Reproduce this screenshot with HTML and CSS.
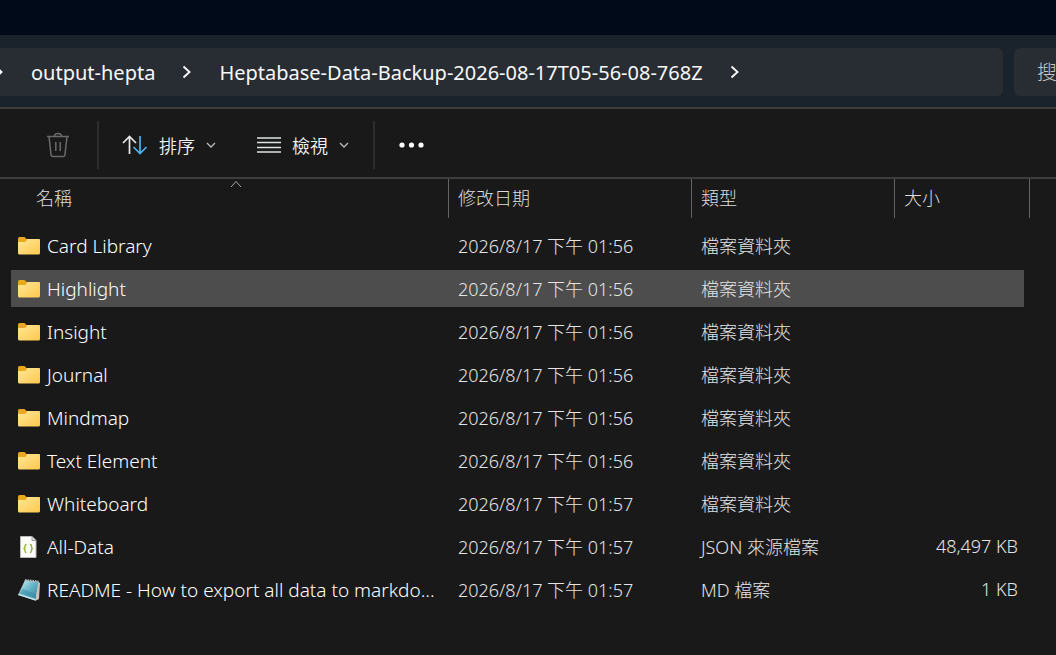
FILE: index.html
```html
<!DOCTYPE html>
<html lang="zh-Hant">
<head>
    <meta charset="UTF-8">
    <meta name="viewport" content="width=device-width, initial-scale=1">
    <title>Heptabase-Data-Backup</title>
    <link rel="stylesheet" href="styles.css">
</head>
<body>
    <svg class="defs" width="0" height="0" aria-hidden="true">
        <defs>
            <linearGradient id="folder-front" x1="0" y1="0" x2="1" y2="1">
                <stop offset="0" stop-color="#ffe69a"/>
                <stop offset="1" stop-color="#fdc94b"/>
            </linearGradient>
            <linearGradient id="note-page" x1="0" y1="0" x2="1" y2="1">
                <stop offset="0" stop-color="#d3f1f7"/>
                <stop offset="0.5" stop-color="#67b3c6"/>
                <stop offset="1" stop-color="#2b7f9b"/>
            </linearGradient>
            <symbol id="folder" viewBox="0 0 22 18">
                <path d="M0 2Q0 0 1.500 0H6.500L8.500 2H20.500Q22 2 22 3.500V10H0Z" fill="#e9a820"/>
                <path d="M0 5H6.500Q7.500 5 8.300 4L9 2H21Q22 2 22 3V16Q22 17.500 20.500 17.500H1.500Q0 17.500 0 16Z" fill="url(#folder-front)"/>
            </symbol>
            <symbol id="chevron" viewBox="0 0 10 14">
                <path d="M1.500 1.500L7.500 7L1.500 12.500" fill="none" stroke="currentColor" stroke-width="1.900"/>
            </symbol>
            <symbol id="caret" viewBox="0 0 10 6">
                <path d="M1 1L5 5L9 1" fill="none" stroke="currentColor" stroke-width="1.300"/>
            </symbol>
        </defs>
    </svg>

    <div class="titlebar"></div>

    <header class="navbar">
        <nav class="address" aria-label="路徑">
            <svg class="chevron" aria-hidden="true"><use href="#chevron"/></svg>
            <button type="button" class="crumb">output-hepta</button>
            <svg class="chevron" aria-hidden="true"><use href="#chevron"/></svg>
            <button type="button" class="crumb">Heptabase-Data-Backup-2026-08-17T05-56-08-768Z</button>
            <svg class="chevron" aria-hidden="true"><use href="#chevron"/></svg>
        </nav>
        <input class="search" type="text" placeholder="搜" aria-label="搜尋">
    </header>

    <div class="toolbar">
        <button type="button" class="tool tool-delete" aria-label="刪除" disabled>
            <svg width="24" height="26" viewBox="0 0 24 26" fill="none" stroke="currentColor" stroke-width="1.500">
                <path d="M1 4.500H23M8.500 4.500Q8.500 1.500 12 1.500T15.500 4.500M3 4.500L5 22.500Q5.200 24.500 7 24.500H17Q18.800 24.500 19 22.500L21 4.500M9.800 10V19M14.200 10V19"/>
            </svg>
        </button>
        <span class="divider"></span>
        <button type="button" class="tool tool-sort">
            <svg width="26" height="20" viewBox="0 0 26 20" fill="none" stroke-width="1.700">
                <path d="M7.500 19V1.500M1 8L7.500 1.500L14 8" stroke="#e8e8e8"/>
                <path d="M18 1V18.500M11.500 12L18 18.500L24.500 12" stroke="#4cb4ee"/>
            </svg>
            <span>排序</span>
            <svg class="caret" aria-hidden="true"><use href="#caret"/></svg>
        </button>
        <button type="button" class="tool tool-view">
            <svg width="24" height="18" viewBox="0 0 24 18" stroke="#dce4e1" stroke-width="1.500">
                <path d="M0 2H24M0 6.500H24M0 11.500H24M0 16H24"/>
            </svg>
            <span>檢視</span>
            <svg class="caret" aria-hidden="true"><use href="#caret"/></svg>
        </button>
        <span class="divider"></span>
        <button type="button" class="tool tool-more" aria-label="查看更多">
            <svg width="26" height="6" viewBox="0 0 26 6" fill="#fff">
                <circle cx="3" cy="3" r="2.600"/>
                <circle cx="12.500" cy="3" r="2.600"/>
                <circle cx="22" cy="3" r="2.600"/>
            </svg>
        </button>
    </div>

    <main class="list">
        <table class="files">
            <colgroup>
                <col class="col-name">
                <col class="col-date">
                <col class="col-type">
                <col class="col-size">
            </colgroup>
            <thead>
                <tr>
                    <th class="sorted" aria-sort="ascending">名稱
                        <svg class="sort-mark" viewBox="0 0 12 8" aria-hidden="true">
                            <path d="M1 7L6 1.500L11 7" fill="none" stroke="#a8a8a8"/>
                        </svg>
                    </th>
                    <th>修改日期</th>
                    <th>類型</th>
                    <th>大小</th>
                </tr>
            </thead>
            <tbody>
                <tr>
                    <td><div class="name"><svg class="icon" aria-hidden="true"><use href="#folder"/></svg><span>Card Library</span></div></td>
                    <td>2026/8/17 下午 01:56</td>
                    <td>檔案資料夾</td>
                    <td></td>
                </tr>
                <tr class="active">
                    <td><div class="name"><svg class="icon" aria-hidden="true"><use href="#folder"/></svg><span>Highlight</span></div></td>
                    <td>2026/8/17 下午 01:56</td>
                    <td>檔案資料夾</td>
                    <td></td>
                </tr>
                <tr>
                    <td><div class="name"><svg class="icon" aria-hidden="true"><use href="#folder"/></svg><span>Insight</span></div></td>
                    <td>2026/8/17 下午 01:56</td>
                    <td>檔案資料夾</td>
                    <td></td>
                </tr>
                <tr>
                    <td><div class="name"><svg class="icon" aria-hidden="true"><use href="#folder"/></svg><span>Journal</span></div></td>
                    <td>2026/8/17 下午 01:56</td>
                    <td>檔案資料夾</td>
                    <td></td>
                </tr>
                <tr>
                    <td><div class="name"><svg class="icon" aria-hidden="true"><use href="#folder"/></svg><span>Mindmap</span></div></td>
                    <td>2026/8/17 下午 01:56</td>
                    <td>檔案資料夾</td>
                    <td></td>
                </tr>
                <tr>
                    <td><div class="name"><svg class="icon" aria-hidden="true"><use href="#folder"/></svg><span>Text Element</span></div></td>
                    <td>2026/8/17 下午 01:56</td>
                    <td>檔案資料夾</td>
                    <td></td>
                </tr>
                <tr>
                    <td><div class="name"><svg class="icon" aria-hidden="true"><use href="#folder"/></svg><span>Whiteboard</span></div></td>
                    <td>2026/8/17 下午 01:57</td>
                    <td>檔案資料夾</td>
                    <td></td>
                </tr>
                <tr>
                    <td><div class="name">
                        <svg class="icon icon-doc" viewBox="0 0 22 22" aria-hidden="true">
                            <path d="M2.500 0.500H14L18 4.500V21.500H2.500Z" fill="#fbfbf8" stroke="#b9b9b9"/>
                            <path d="M14 0.500V4.500H18" fill="#ddd" stroke="#999"/>
                            <path d="M8.500 8.500Q7 8.500 7 10V11.500L6 12.500L7 13.500V15Q7 16.500 8.500 16.500M12 8.500Q13.500 8.500 13.500 10V11.500L14.500 12.500L13.500 13.500V15Q13.500 16.500 12 16.500" fill="none" stroke="#8db52c" stroke-width="1.300"/>
                        </svg>
                        <span>All-Data</span></div></td>
                    <td>2026/8/17 下午 01:57</td>
                    <td>JSON 來源檔案</td>
                    <td>48,497 KB</td>
                </tr>
                <tr>
                    <td><div class="name">
                        <svg class="icon icon-doc" viewBox="0 0 22 22" aria-hidden="true">
                            <path d="M19.500 2L22 4L21 20L17 22Z" fill="#c9c2b8"/>
                            <path d="M7 1L20.500 2.500L17 21.500L0 16Z" fill="url(#note-page)"/>
                            <path d="M0 15.500L5 10L18 15L17 21.500Z" fill="#348ca5" opacity="0.500"/>
                            <path d="M0 16L17 21.500L18 20L1 14.500Z" fill="#bfe2e8"/>
                            <path d="M7 1L20.500 2.500" stroke="#b8b8b8" stroke-width="2" stroke-dasharray="1.500 1"/>
                        </svg>
                        <span>README - How to export all data to markdo...</span></div></td>
                    <td>2026/8/17 下午 01:57</td>
                    <td>MD 檔案</td>
                    <td>1 KB</td>
                </tr>
            </tbody>
        </table>
    </main>
</body>
</html>
```

FILE: styles.css
```css
*{
    box-sizing: border-box;
}
body{
    margin: 0;
    min-height: 100vh;
    background: #191919;
    color: #f2f2f2;
    font-family: "Noto Sans", "Noto Sans CJK TC", sans-serif;
    font-size: 18px;
    overflow-x: hidden;
}
button, input{
    border: 0;
    padding: 0;
    background: none;
    color: inherit;
    font: inherit;
}
.defs{
    position: absolute;
}

/* title + address */
.titlebar{
    height: 35px;
    background: #010a18;
}
.navbar{
    display: flex;
    align-items: center;
    gap: 11px;
    height: 74px;
    padding-top: 2px;
    background: #1a222b;
    border-bottom: 2px solid #3d3d3d;
}
.address{
    display: flex;
    align-items: center;
    flex: 1;
    gap: 27px;
    height: 48px;
    margin-left: -6px;
    background: #282d33;
    border-radius: 0 6px 6px 0;
    color: #f8f8f8;
    font-size: 20px;
    white-space: nowrap;
}
.chevron{
    width: 10px;
    height: 14px;
}
.search{
    width: 42px;
    height: 48px;
    padding-left: 23px;
    background: #282d33;
    border-radius: 6px 0 0 6px;
    font-size: 20px;
    font-weight: 300;
}
.search::placeholder{
    color: #c4c6c8;
}

/* toolbar */
.toolbar{
    display: flex;
    align-items: center;
    height: 70px;
    padding: 4px 0 0 46px;
    border-bottom: 2px solid #3d3d3d;
    font-weight: 350;
}
.tool{
    display: flex;
    align-items: center;
    gap: 11px;
}
.tool-delete{
    margin-right: 27px;
    color: #6a6a6a;
}
.tool-sort{
    margin: 0 41px 0 23px;
}
.tool-view{
    margin-right: 24px;
}
.tool-more{
    margin-left: 24px;
}
.divider{
    width: 2px;
    height: 48px;
    background: #2d2d2d;
}
.caret{
    width: 10px;
    height: 6px;
    color: #bbb;
}

/* file table */
.list{
    padding: 0 26px 0 11px;
}
.files{
    width: 100%;
    table-layout: fixed;
    border-collapse: separate;
    border-spacing: 0;
    font-weight: 300;
    white-space: nowrap;
}
.col-date{
    width: 243px;
}
.col-type{
    width: 203px;
}
.col-size{
    width: 135px;
}
.files th{
    position: relative;
    height: 39px;
    padding: 0 0 4px 9px;
    border-right: 1px solid #636363;
    color: #dedede;
    font-weight: 300;
    text-align: left;
}
.files th.sorted{
    padding-left: 25px;
}
.sort-mark{
    position: absolute;
    top: 1px;
    left: 50%;
    width: 12px;
    height: 8px;
}
.files tbody::before{
    content: "";
    display: block;
    height: 6px;
}
.files td{
    height: 43px;
    padding: 0 0 2px 9px;
    border: solid transparent;
    border-width: 3px 0;
    background-clip: padding-box;
    color: #e4e4e4;
}
.files td:first-child{
    padding: 0 0 0 7px;
    color: #fff;
    font-size: 19px;
}
.files td:last-child{
    padding-right: 6px;
    border-right-width: 6px;
    text-align: right;
}
.files .active td{
    background-color: #4d4d4d;
}
.name{
    display: flex;
    align-items: center;
    gap: 7px;
}
.icon{
    flex: none;
    width: 22px;
    height: 18px;
}
.icon-doc{
    height: 22px;
}
```
